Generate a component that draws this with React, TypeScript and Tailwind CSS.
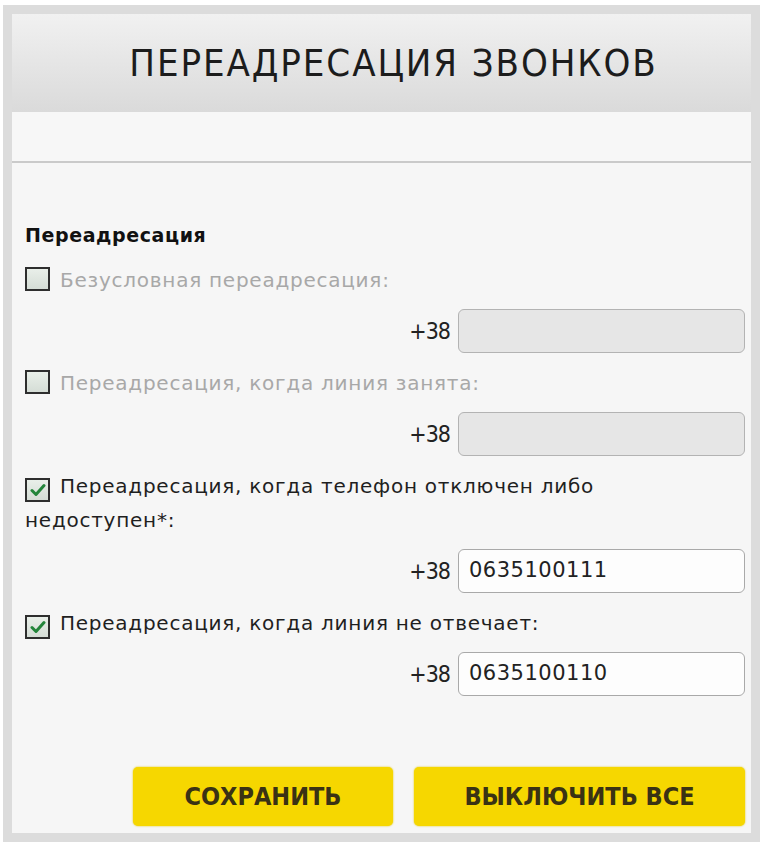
import React from "react";

interface RowProps {
    label: string,
    checked?: boolean,
    value?: string,
}

function CheckBox({ checked }: { checked?: boolean }) {
    return (
        <span className="inline-flex items-center justify-center w-[25px] h-[24px] border-2 border-[#2e2e2e] bg-gradient-to-b from-[#e9efe9] to-[#d5ddd6] align-[-4px] mr-[10px]">
            {checked && (
                <svg width="16" height="14" viewBox="0 0 16 14">
                    <path d="M2 7.5 L6 11.5 L14 2.5" fill="none" stroke="#23853a" strokeWidth="3" strokeLinecap="round" strokeLinejoin="round" />
                </svg>
            )}
        </span>
    )
}

function ForwardRow({ label, checked, value }: RowProps) {
    return (
        <div className="flex flex-col">
            <p className={`text-[20px] leading-[34px] tracking-[0.75px] pr-[24px] ${checked ? "text-[#1f1f1f]" : "text-[#a8a8a8]"}`}>
                <CheckBox checked={checked} />
                {label}
            </p>
            <div className="flex items-center justify-end gap-2 pr-[6px] mt-[12px]">
                <span className="text-[23px] text-[#222] font-['DejaVu_Sans_Condensed',sans-serif] tracking-[-1px]">+38</span>
                <div className={`w-[287px] h-[44px] rounded-[6px] border flex items-center px-[10px] text-[21px] tracking-[0.5px] text-[#222] ${checked ? "bg-[#fdfdfd] border-[#a9a9a9]" : "bg-[#e6e6e6] border-[#b3b3b3]"}`}>
                    {value}
                </div>
            </div>
        </div>
    )
}

export default function App() {
    return (
        <div className="w-[764px] h-[844px] bg-white pt-[5px] pl-[3px] pr-[4px] pb-[2px] font-['DejaVu_Sans',sans-serif]">
            <div className="h-full border-[9px] border-[#dcdcdc] flex flex-col bg-[#f6f6f6]">
                <div className="h-[98px] bg-gradient-to-b from-[#f1f1f1] to-[#dadada] flex items-center justify-center pl-[24px]">
                    <h1 className="text-[38px] text-[#1c1c1c] font-['DejaVu_Sans_Condensed',sans-serif] tracking-[1.9px]">ПЕРЕАДРЕСАЦИЯ ЗВОНКОВ</h1>
                </div>
                <div className="h-[51px] bg-[#f7f7f7] border-b-2 border-[#cacaca]"></div>

                <div className="flex flex-col pl-[13px] pt-[60px]">
                    <h2 className="text-[19px] leading-[24px] font-bold text-[#111] tracking-[0.6px]">Переадресация</h2>
                    <div className="flex flex-col gap-[13px] mt-[16px]">
                        <ForwardRow label="Безусловная переадресация:" />
                        <ForwardRow label="Переадресация, когда линия занята:" />
                        <ForwardRow label="Переадресация, когда телефон отключен либо недоступен*:" checked value="0635100111" />
                        <ForwardRow label="Переадресация, когда линия не отвечает:" checked value="0635100110" />
                    </div>
                    <div className="flex justify-end gap-[21px] pr-[6px] mt-[71px]">
                        <button className="w-[260px] h-[59px] rounded-[5px] bg-[#f6d700] shadow-[0_0_2px_#e0c400] text-[25px] font-bold text-[#3a3214] font-['DejaVu_Sans_Condensed',sans-serif]">СОХРАНИТЬ</button>
                        <button className="w-[331px] h-[59px] rounded-[5px] bg-[#f6d700] shadow-[0_0_2px_#e0c400] text-[25px] font-bold text-[#3a3214] font-['DejaVu_Sans_Condensed',sans-serif]">ВЫКЛЮЧИТЬ ВСЕ</button>
                    </div>
                </div>
            </div>
        </div>
    )
}
